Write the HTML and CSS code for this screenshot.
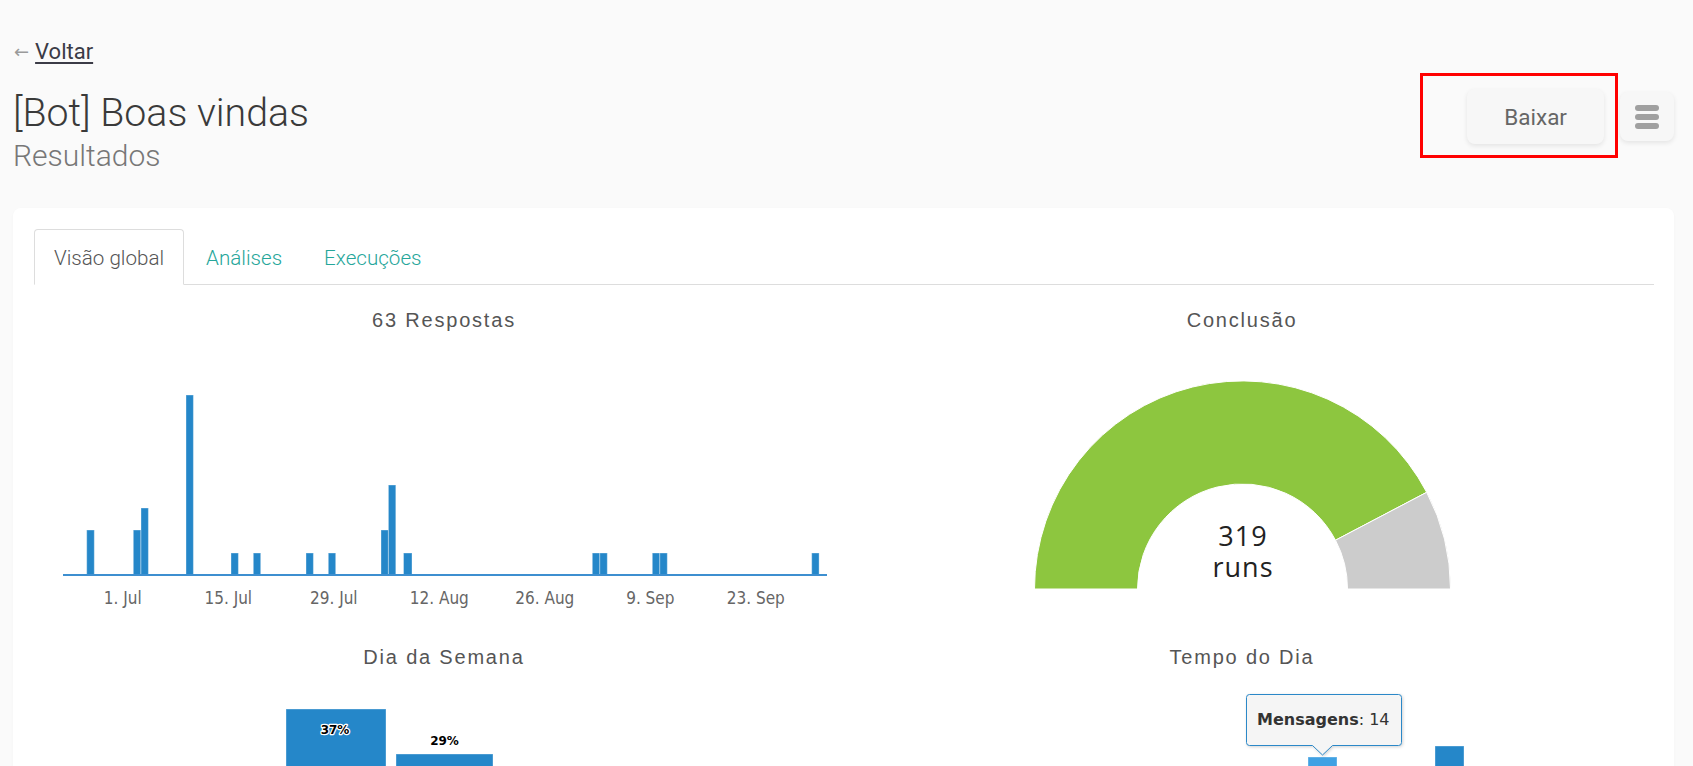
FILE: index.html
```html
<!DOCTYPE html>
<html lang="pt">
<head>
    <meta charset="UTF-8">
    <meta name="viewport" content="width=device-width, initial-scale=1.0">
    <title>[Bot] Boas vindas - Resultados</title>
    <link rel="stylesheet" href="styles.css">
</head>
<body>
    <div class="page">
        <div class="nav">
            <a class="back" href="#"><span class="arrow">←</span><span class="back-text">Voltar</span></a>
        </div>

        <div class="head">
            <div class="titles">
                <h1>[Bot] Boas vindas</h1>
                <h2>Resultados</h2>
            </div>
            <div class="actions">
                <button class="btn btn-download">Baixar</button>
                <button class="btn btn-menu" aria-label="Menu">
                    <svg width="24" height="24" viewBox="0 0 24 24">
                        <rect x="0" y="0" width="24" height="6" rx="3"/>
                        <rect x="0" y="9" width="24" height="6" rx="3"/>
                        <rect x="0" y="18" width="24" height="6" rx="3"/>
                    </svg>
                </button>
                <!-- marcação vermelha em volta do botão -->
                <div class="highlight"></div>
            </div>
        </div>

        <div class="card">
            <ul class="tabs">
                <li class="tab active">Visão global</li>
                <li class="tab">Análises</li>
                <li class="tab">Execuções</li>
            </ul>

            <div class="charts">
                <!-- 63 respostas por dia -->
                <div class="chart">
                    <h3 class="chart-title">63 Respostas</h3>
                    <svg class="plot" viewBox="0 0 798 289">
                        <g class="bars">
                            <rect x="41.7" y="197" width="7.6" height="45"/>
                            <rect x="88.3" y="197" width="7.6" height="45"/>
                            <rect x="96" y="175" width="7.4" height="67"/>
                            <rect x="141" y="62" width="7.4" height="180"/>
                            <rect x="186" y="220" width="7.4" height="22"/>
                            <rect x="208.3" y="220" width="7.4" height="22"/>
                            <rect x="261" y="220" width="7.4" height="22"/>
                            <rect x="283.3" y="220" width="7.4" height="22"/>
                            <rect x="336" y="197" width="7.4" height="45"/>
                            <rect x="343.4" y="152" width="7.4" height="90"/>
                            <rect x="358.5" y="220" width="8.5" height="22"/>
                            <rect x="547.3" y="220" width="7.5" height="22"/>
                            <rect x="554.8" y="220" width="7.5" height="22"/>
                            <rect x="607.3" y="220" width="7.5" height="22"/>
                            <rect x="614.8" y="220" width="7.5" height="22"/>
                            <rect x="766.7" y="220" width="7.4" height="22"/>
                        </g>
                        <line class="axis" x1="18" y1="242" x2="782" y2="242"/>
                        <g class="xlabels">
                            <text x="77.8" y="271">1. Jul</text>
                            <text x="183.3" y="271">15. Jul</text>
                            <text x="288.8" y="271">29. Jul</text>
                            <text x="394.3" y="271">12. Aug</text>
                            <text x="499.8" y="271">26. Aug</text>
                            <text x="605.3" y="271">9. Sep</text>
                            <text x="710.8" y="271">23. Sep</text>
                        </g>
                    </svg>
                </div>

                <!-- conclusao -->
                <div class="chart">
                    <h3 class="chart-title">Conclusão</h3>
                    <svg class="plot" viewBox="0 0 798 289">
                        <path class="slice-done" d="M191.5 256 A208 208 0 0 1 583.7 159.3 L492.5 207.2 A105 105 0 0 0 294.5 256 Z"/>
                        <path class="slice-rest" d="M583.7 159.3 A208 208 0 0 1 607.5 256 L504.5 256 A105 105 0 0 0 492.5 207.2 Z"/>
                        <text class="gauge-value" x="400" y="213">319</text>
                        <text class="gauge-value" x="400" y="244">runs</text>
                    </svg>
                </div>

                <!-- dia da semana -->
                <div class="chart">
                    <h3 class="chart-title">Dia da Semana</h3>
                    <svg class="plot" viewBox="0 0 798 289">
                        <g class="bars">
                            <rect x="241" y="39" width="100" height="250"/>
                            <rect x="351" y="84" width="97" height="205"/>
                        </g>
                        <text class="data-label outlined" x="290" y="63.5">37%</text>
                        <text class="data-label" x="399.5" y="74.5">29%</text>
                    </svg>
                </div>

                <!-- tempo do dia -->
                <div class="chart">
                    <h3 class="chart-title">Tempo do Dia</h3>
                    <svg class="plot" viewBox="0 0 798 289">
                        <g class="bars">
                            <rect class="hover" x="465" y="87" width="29" height="202"/>
                            <rect x="592" y="76" width="29" height="213"/>
                        </g>
                        <g class="tooltip">
                            <path d="M406.5 24.5 H555.5 A3 3 0 0 1 558.5 27.5 V72.5 A3 3 0 0 1 555.5 75.5 H489.5 L479.5 85 L469.5 75.5 H406.5 A3 3 0 0 1 403.5 72.5 V27.5 A3 3 0 0 1 406.5 24.5 Z"/>
                            <text x="414" y="55"><tspan class="tt-key">Mensagens</tspan>: 14</text>
                        </g>
                    </svg>
                </div>
            </div>
        </div>
    </div>
</body>
</html>
```

FILE: styles.css
```css
html,
body {
    height: 100%;
}

body {
    margin: 0;
    background-color: #fafafa;
    font-family: Roboto, "Noto Sans", sans-serif;
    color: #333;
    overflow: hidden;
}

.page {
    padding: 40px 19px 0 13px;
}

/* voltar */
.nav {
    height: 24px;
}

.back {
    display: inline-flex;
    align-items: center;
    gap: 6px;
    margin-left: 1px;
    font-size: 22px;
    line-height: 24px;
    color: #3b3b46;
    text-decoration: none;
}

.arrow {
    font-family: "DejaVu Sans", sans-serif;
    font-size: 18px;
    color: #9a9a9a;
}

.back-text {
    text-decoration: underline;
    text-decoration-thickness: 1.5px;
    text-underline-offset: 3px;
}

/* cabecalho */
.head {
    display: flex;
    justify-content: space-between;
    align-items: flex-start;
    margin-top: 26px;
}

.titles h1 {
    margin: 0;
    font-size: 39.3px;
    line-height: 46px;
    font-weight: 300;
    color: #3a3a3a;
}

.titles h2 {
    margin: 3px 0 0;
    font-size: 30px;
    line-height: 34px;
    font-weight: 300;
    color: #777;
}

.actions {
    position: relative;
    display: flex;
    align-items: center;
    gap: 16px;
    margin-top: -1px;
}

.btn {
    border: none;
    background-color: #f7f7f7;
    border-radius: 8px;
    box-shadow: 0 2px 5px rgba(0, 0, 0, 0.09);
    font-family: Roboto, sans-serif;
    cursor: pointer;
}

.btn-download {
    height: 55px;
    padding: 0 37px;
    font-size: 22.5px;
    color: #666;
}

.btn-menu {
    display: flex;
    align-items: center;
    justify-content: center;
    width: 54px;
    height: 49px;
    padding: 0;
}

.btn-menu svg {
    fill: #a0a0a0;
}

.highlight {
    position: absolute;
    left: -47px;
    top: -16px;
    width: 192px;
    height: 79px;
    border: 3px solid #f00;
    pointer-events: none;
}

/* card */
.card {
    margin-top: 35px;
    padding: 21px 20px 0 21px;
    background-color: #fff;
    border-radius: 8px;
    box-shadow: 0 1px 3px rgba(0, 0, 0, 0.03);
}

.tabs {
    display: flex;
    margin: 0;
    padding: 0;
    list-style: none;
    border-bottom: 1px solid #ddd;
}

.tab {
    margin-right: 2px;
    margin-bottom: -1px;
    padding: 16px 19px 14px;
    font-size: 20.6px;
    line-height: 24px;
    font-weight: 300;
    color: #26a69a;
    border: 1px solid transparent;
    border-radius: 4px 4px 0 0;
}

.tab.active {
    color: #555;
    background-color: #fff;
    border-color: #ddd;
    border-bottom-color: #fff;
}

.charts {
    display: grid;
    grid-template-columns: 798px 798px;
    margin: 0 0 0 11px;
}

.chart {
    padding-top: 22px;
}

.chart-title {
    margin: 0;
    font-family: "Liberation Sans", Arial, sans-serif;
    font-size: 20px;
    line-height: 26px;
    font-weight: normal;
    letter-spacing: 1.8px;
    text-align: center;
    color: #555;
}

.plot {
    display: block;
    width: 798px;
    height: 289px;
    overflow: hidden;
}

.bars rect {
    fill: #2587c9;
    stroke: rgba(255, 255, 255, 0.35);
    stroke-width: 1;
}

.bars rect.hover {
    fill: #40a1e3;
}

.axis {
    stroke: #3d8fd0;
    stroke-width: 1.8;
}

.xlabels text {
    font-family: "DejaVu Sans Condensed", "DejaVu Sans", sans-serif;
    font-stretch: condensed;
    font-size: 17px;
    fill: #666;
    text-anchor: middle;
}

.slice-done {
    fill: #8dc63f;
    stroke: #fff;
    stroke-width: 1;
}

.slice-rest {
    fill: #cccccc;
    stroke: #fff;
    stroke-width: 1;
}

.gauge-value {
    font-family: "Open Sans", sans-serif;
    font-size: 27px;
    letter-spacing: 1px;
    fill: #222;
    text-anchor: middle;
}

.data-label {
    font-family: "DejaVu Sans", sans-serif;
    font-size: 12px;
    font-weight: bold;
    fill: #000;
    text-anchor: middle;
}

.data-label.outlined {
    stroke: #fff;
    stroke-width: 2.5px;
    stroke-linejoin: round;
    paint-order: stroke;
}

.tooltip path {
    fill: rgba(247, 247, 247, 0.95);
    stroke: #2b88c8;
    stroke-width: 1;
    filter: drop-shadow(1px 1px 1.5px rgba(0, 0, 0, 0.18));
}

.tooltip text {
    font-family: "DejaVu Sans", sans-serif;
    font-size: 16px;
    fill: #333;
}

.tt-key {
    font-weight: bold;
}
```
